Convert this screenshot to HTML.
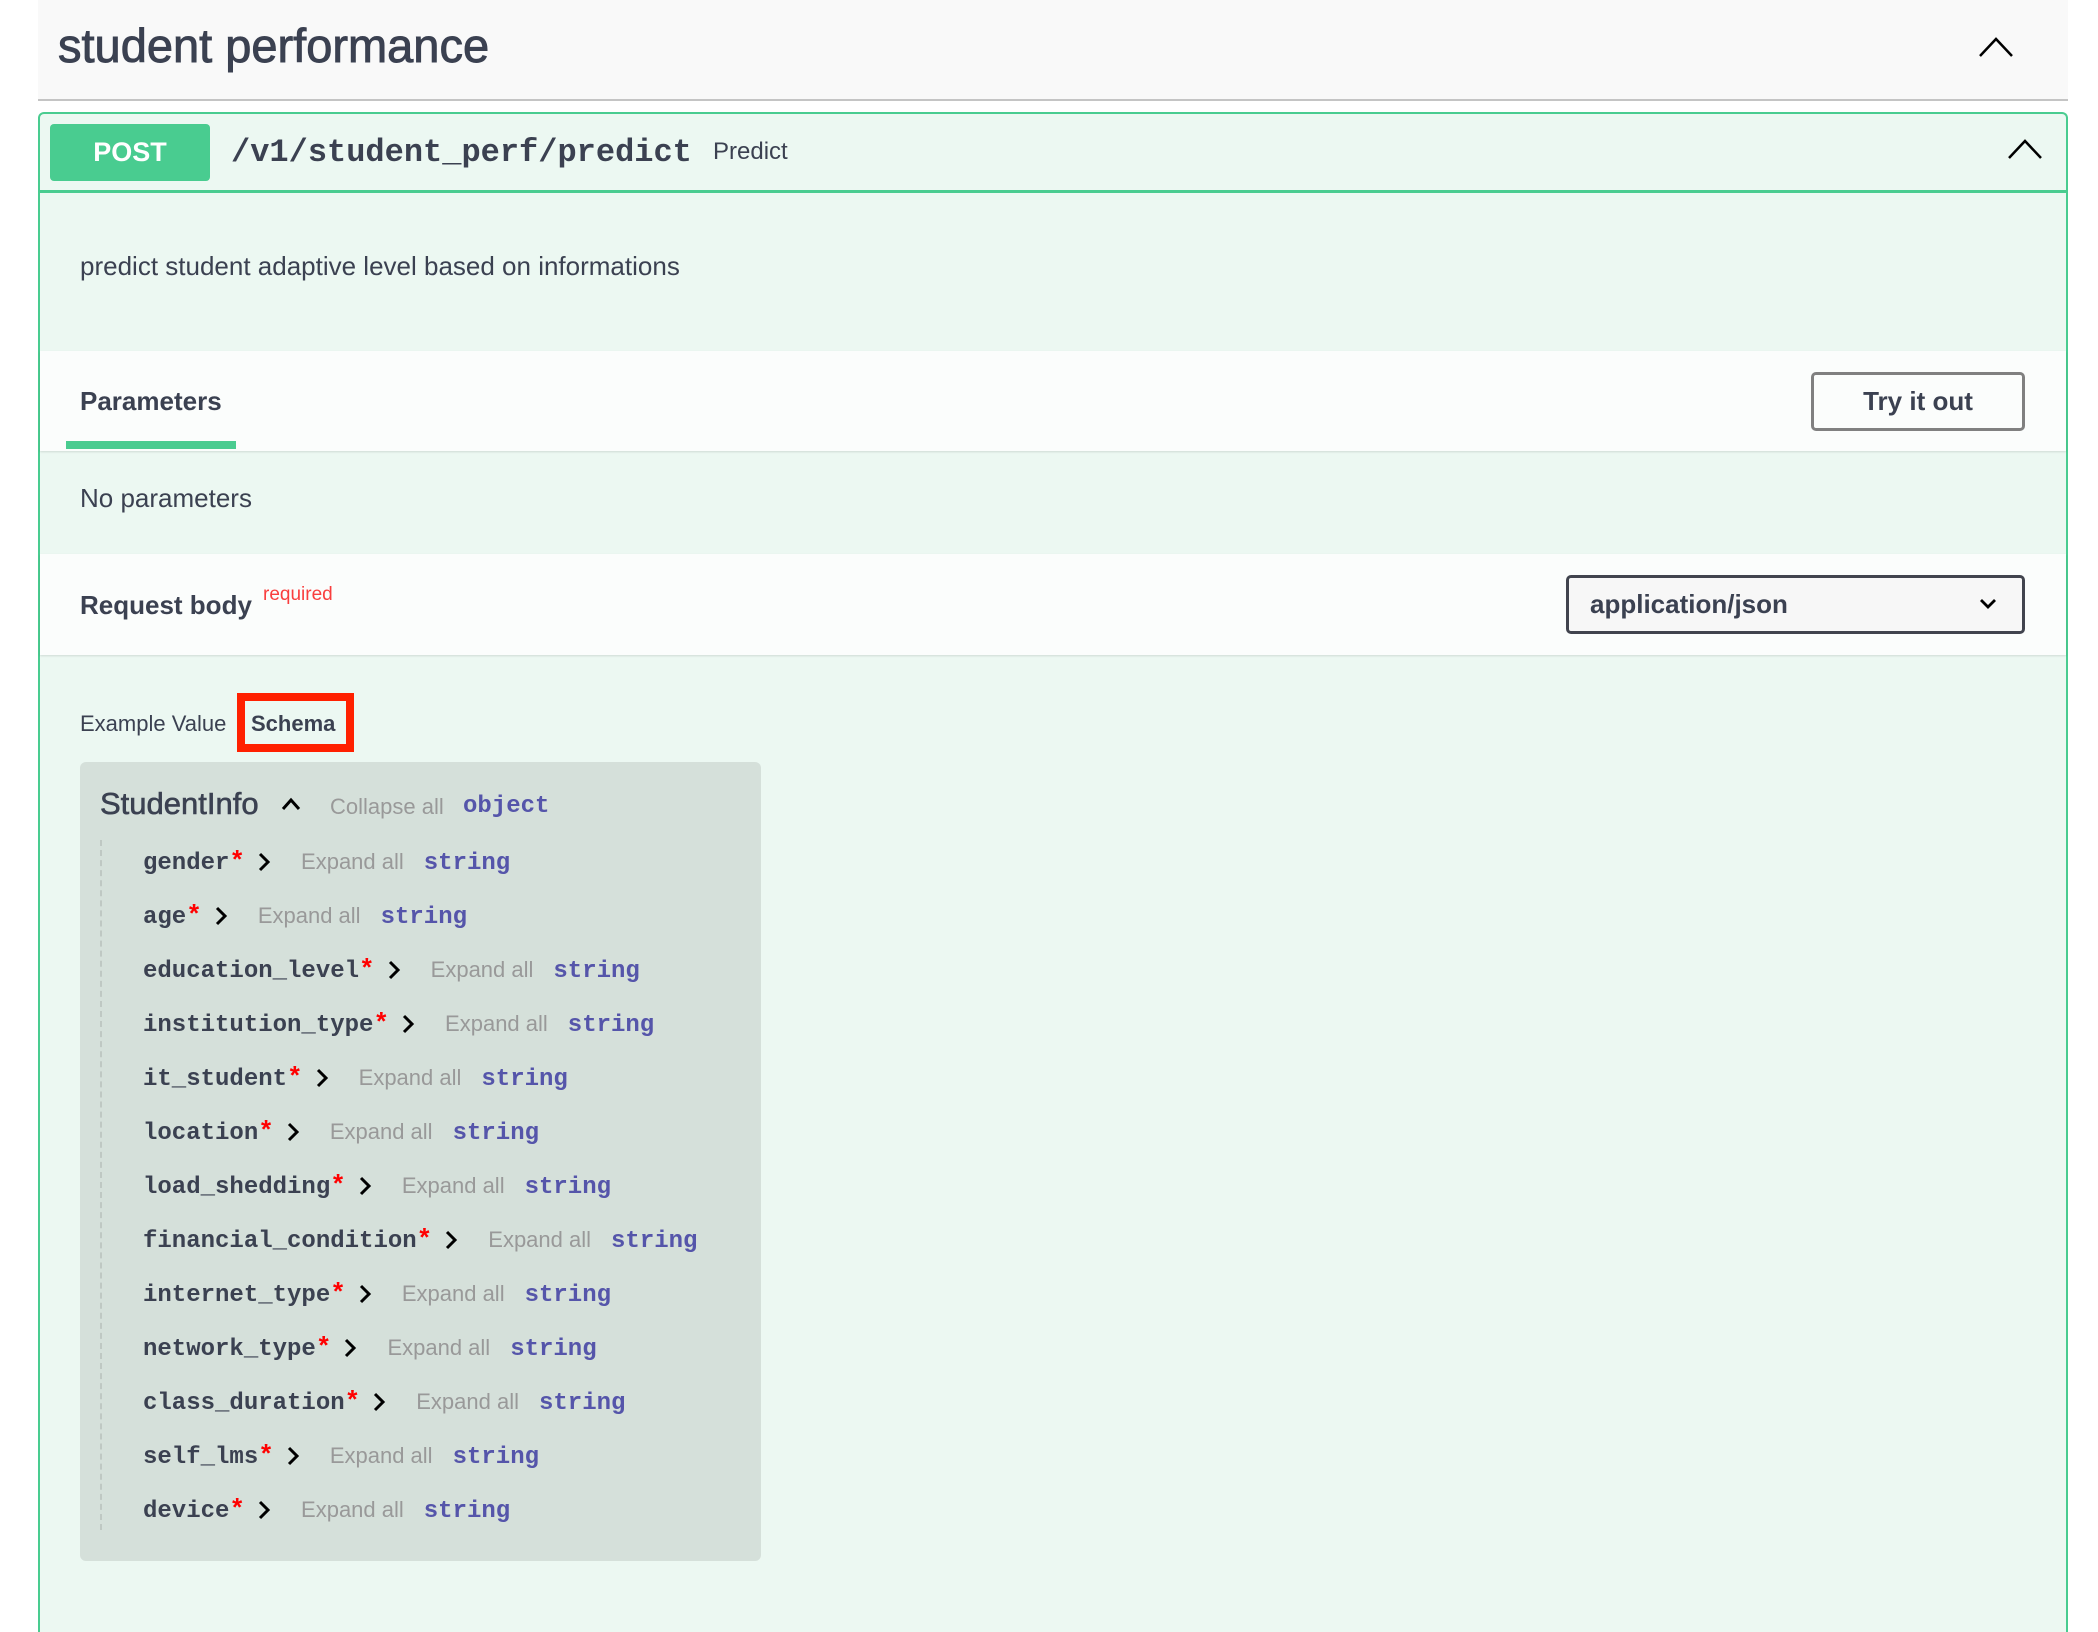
<!DOCTYPE html>
<html style="overflow:hidden;height:1632px"><head><meta charset="utf-8">
<style>
*{margin:0;padding:0;box-sizing:border-box}
body{width:2098px;height:1632px;background:#fff;position:relative;overflow:hidden;font-family:"Liberation Sans",sans-serif;color:#3b4151}
.abs{position:absolute}
.mono{font-family:"Liberation Mono",monospace;font-weight:bold}
.row{position:absolute;left:143px;height:30px;white-space:nowrap;font-size:24px;line-height:30px}
.row .n{font-family:"Liberation Mono",monospace;font-weight:bold;color:#3b4151}
.row .s{color:#f00;font-family:"Liberation Mono",monospace;font-weight:bold;font-size:26px}
.row .c{display:inline-block;width:14px;height:20px;vertical-align:-3px;margin-left:12px}
.row .e{color:#999;font-size:22px;margin-left:30px}
.row .t{font-family:"Liberation Mono",monospace;font-weight:bold;color:#55a;margin-left:20px}
</style></head><body>
<div class="abs" style="left:38px;top:0;width:2030px;height:101px;background:#f9f9f9;border-bottom:2px solid #c4c4c4"></div>
<div class="abs" style="left:58px;top:16px;font-size:47px;line-height:60px;color:#3b4151;-webkit-text-stroke:0.9px #3b4151">student performance</div>
<svg class="abs" style="left:1978px;top:36px" width="36" height="22" viewBox="0 0 36 22"><path d="M2 20 L18 3 L34 20" fill="none" stroke="#000" stroke-width="2.5"/></svg>

<div class="abs" style="left:38px;top:112px;width:2030px;height:1520px;background:#ecf8f2;border:2px solid #49cc90;border-bottom:none;border-radius:6px 6px 0 0"></div>
<div class="abs" style="left:40px;top:190px;width:2026px;height:3px;background:#49cc90"></div>
<div class="abs" style="left:50px;top:124px;width:160px;height:57px;background:#49cc90;border-radius:4px;color:#fff;font-weight:bold;font-size:27px;line-height:57px;text-align:center">POST</div>
<div class="abs mono" style="left:231px;top:131px;font-size:32px;line-height:44px;color:#3b4151">/v1/student_perf/predict</div>
<div class="abs" style="left:713px;top:134px;font-size:24px;line-height:36px">Predict</div>
<svg class="abs" style="left:2007px;top:138px" width="36" height="22" viewBox="0 0 36 22"><path d="M2 20 L18 3 L34 20" fill="none" stroke="#000" stroke-width="2.5"/></svg>

<div class="abs" style="left:80px;top:249px;font-size:26px;line-height:34px">predict student adaptive level based on informations</div>

<div class="abs" style="left:40px;top:351px;width:2026px;height:100px;background:#fbfdfc;box-shadow:0 1px 2px rgba(0,0,0,.12)"></div>
<div class="abs" style="left:80px;top:384px;font-size:26px;font-weight:bold;line-height:34px">Parameters</div>
<div class="abs" style="left:66px;top:441px;width:170px;height:8px;background:#49cc90"></div>
<div class="abs" style="left:1811px;top:372px;width:214px;height:59px;border:3px solid #808080;border-radius:5px;font-size:26px;font-weight:bold;text-align:center;line-height:53px">Try it out</div>

<div class="abs" style="left:80px;top:481px;font-size:26px;line-height:34px">No parameters</div>

<div class="abs" style="left:40px;top:554px;width:2026px;height:101px;background:#fbfdfc;box-shadow:0 1px 2px rgba(0,0,0,.12)"></div>
<div class="abs" style="left:80px;top:588px;font-size:26px;font-weight:bold;line-height:34px">Request body</div>
<div class="abs" style="left:263px;top:583px;font-size:19px;color:#f93e3e;line-height:24px">required</div>
<div class="abs" style="left:1566px;top:575px;width:459px;height:59px;border:3px solid #41444e;border-radius:5px;background:#f7f7f7;font-size:26px;font-weight:bold;line-height:53px;padding-left:21px">application/json</div>
<svg class="abs" style="left:1978px;top:597px" width="20" height="14" viewBox="0 0 20 14"><path d="M3 3 L10 10 L17 3" fill="none" stroke="#000" stroke-width="2.8"/></svg>

<div class="abs" style="left:80px;top:709px;font-size:22px;line-height:30px">Example Value</div>
<div class="abs" style="left:237px;top:693px;width:117px;height:59px;border:8px solid #ff2000"></div>
<div class="abs" style="left:251px;top:709px;font-size:22px;font-weight:bold;line-height:30px">Schema</div>

<div class="abs" style="left:80px;top:762px;width:681px;height:799px;background:#d5e0da;border-radius:6px"></div>
<div class="abs" style="left:100px;top:785px;font-size:31px;line-height:38px;color:#3b4151;-webkit-text-stroke:0.6px #3b4151">StudentInfo</div>
<svg class="abs" style="left:280px;top:796px" width="22" height="16" viewBox="0 0 22 16"><path d="M3 13 L11 4 L19 13" fill="none" stroke="#000" stroke-width="3"/></svg>
<div class="abs" style="left:330px;top:792px;font-size:22px;color:#999;line-height:30px">Collapse all</div>
<div class="abs mono" style="left:463px;top:791px;font-size:24px;color:#55a;line-height:32px">object</div>
<div class="abs" style="left:100px;top:840px;height:690px;border-left:2px dashed #bfc8c3"></div>

<div class="row" style="top:847px"><span class="n">gender</span><span class="s">*</span><svg class="c" viewBox="0 0 14 20"><path d="M3 2 L11 10 L3 18" fill="none" stroke="#000" stroke-width="3"/></svg><span class="e">Expand all</span><span class="t">string</span></div>
<div class="row" style="top:901px"><span class="n">age</span><span class="s">*</span><svg class="c" viewBox="0 0 14 20"><path d="M3 2 L11 10 L3 18" fill="none" stroke="#000" stroke-width="3"/></svg><span class="e">Expand all</span><span class="t">string</span></div>
<div class="row" style="top:955px"><span class="n">education_level</span><span class="s">*</span><svg class="c" viewBox="0 0 14 20"><path d="M3 2 L11 10 L3 18" fill="none" stroke="#000" stroke-width="3"/></svg><span class="e">Expand all</span><span class="t">string</span></div>
<div class="row" style="top:1009px"><span class="n">institution_type</span><span class="s">*</span><svg class="c" viewBox="0 0 14 20"><path d="M3 2 L11 10 L3 18" fill="none" stroke="#000" stroke-width="3"/></svg><span class="e">Expand all</span><span class="t">string</span></div>
<div class="row" style="top:1063px"><span class="n">it_student</span><span class="s">*</span><svg class="c" viewBox="0 0 14 20"><path d="M3 2 L11 10 L3 18" fill="none" stroke="#000" stroke-width="3"/></svg><span class="e">Expand all</span><span class="t">string</span></div>
<div class="row" style="top:1117px"><span class="n">location</span><span class="s">*</span><svg class="c" viewBox="0 0 14 20"><path d="M3 2 L11 10 L3 18" fill="none" stroke="#000" stroke-width="3"/></svg><span class="e">Expand all</span><span class="t">string</span></div>
<div class="row" style="top:1171px"><span class="n">load_shedding</span><span class="s">*</span><svg class="c" viewBox="0 0 14 20"><path d="M3 2 L11 10 L3 18" fill="none" stroke="#000" stroke-width="3"/></svg><span class="e">Expand all</span><span class="t">string</span></div>
<div class="row" style="top:1225px"><span class="n">financial_condition</span><span class="s">*</span><svg class="c" viewBox="0 0 14 20"><path d="M3 2 L11 10 L3 18" fill="none" stroke="#000" stroke-width="3"/></svg><span class="e">Expand all</span><span class="t">string</span></div>
<div class="row" style="top:1279px"><span class="n">internet_type</span><span class="s">*</span><svg class="c" viewBox="0 0 14 20"><path d="M3 2 L11 10 L3 18" fill="none" stroke="#000" stroke-width="3"/></svg><span class="e">Expand all</span><span class="t">string</span></div>
<div class="row" style="top:1333px"><span class="n">network_type</span><span class="s">*</span><svg class="c" viewBox="0 0 14 20"><path d="M3 2 L11 10 L3 18" fill="none" stroke="#000" stroke-width="3"/></svg><span class="e">Expand all</span><span class="t">string</span></div>
<div class="row" style="top:1387px"><span class="n">class_duration</span><span class="s">*</span><svg class="c" viewBox="0 0 14 20"><path d="M3 2 L11 10 L3 18" fill="none" stroke="#000" stroke-width="3"/></svg><span class="e">Expand all</span><span class="t">string</span></div>
<div class="row" style="top:1441px"><span class="n">self_lms</span><span class="s">*</span><svg class="c" viewBox="0 0 14 20"><path d="M3 2 L11 10 L3 18" fill="none" stroke="#000" stroke-width="3"/></svg><span class="e">Expand all</span><span class="t">string</span></div>
<div class="row" style="top:1495px"><span class="n">device</span><span class="s">*</span><svg class="c" viewBox="0 0 14 20"><path d="M3 2 L11 10 L3 18" fill="none" stroke="#000" stroke-width="3"/></svg><span class="e">Expand all</span><span class="t">string</span></div>
</body></html>
